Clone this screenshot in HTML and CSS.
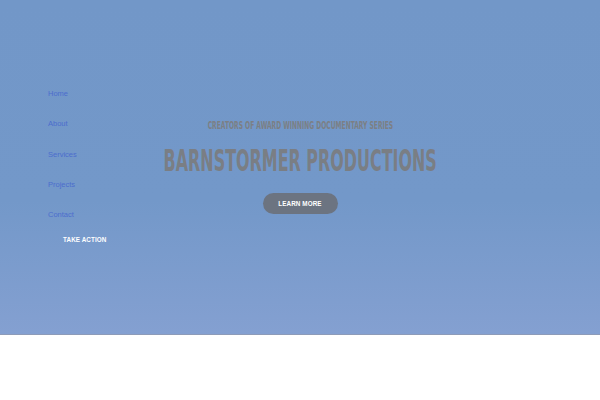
FILE: index.html
```html
<!DOCTYPE html>
<html>
<head>
<meta charset="utf-8">
<link rel="stylesheet" href="styles.css">
</head>
<body>
<section class="hero">
  <nav class="nav">
    <a class="nav-link" href="#">Home</a>
    <a class="nav-link" href="#">About</a>
    <a class="nav-link" href="#">Services</a>
    <a class="nav-link" href="#">Projects</a>
    <a class="nav-link" href="#">Contact</a>
    <a class="nav-cta" href="#">TAKE ACTION</a>
  </nav>
  <div class="center">
    <p class="kicker">CREATORS OF AWARD WINNING DOCUMENTARY SERIES</p>
    <h1 class="title">BARNSTORMER PRODUCTIONS</h1>
    <a class="btn" href="#">LEARN MORE</a>
  </div>
</section>
<section class="below"></section>
</body>
</html>
```
FILE: styles.css
```css
* { box-sizing: border-box; }
html, body { margin: 0; padding: 0; }
body { font-family: "Liberation Sans", Arial, sans-serif; background: #fff; }
.hero {
  height: 335px;
  background: linear-gradient(180deg, #7297c8 0%, #7398c9 60%, #84a0d1 100%);
  position: relative;
  display: flex;
  border-bottom: 1px solid #8d9bb8;
}
.nav {
  width: 160px;
  padding: 89px 0 0 48px;
  display: flex;
  flex-direction: column;
  align-items: flex-start;
}
.nav-link {
  font-size: 7.5px;
  color: #4c6dcd;
  text-decoration: none;
  height: 30.3px;
  line-height: 10px;
}
.nav-cta {
  margin: -4px 0 0 15px;
  font-size: 6.3px;
  font-weight: bold;
  color: #fff;
  text-decoration: none;
  letter-spacing: 0.1px;
}
.center {
  position: absolute;
  left: 0; right: 0; top: 119px;
  display: flex;
  flex-direction: column;
  align-items: center;
}
.kicker {
  margin: 0;
  font-family: "DejaVu Sans Condensed", "DejaVu Sans", sans-serif;
  font-stretch: condensed;
  font-weight: bold;
  font-size: 10px;
  color: #7c7f84;
  transform: scaleX(0.665);
  line-height: 14px;
  white-space: nowrap;
}
.title {
  margin: 11px 0 0;
  font-family: "DejaVu Sans Condensed", "DejaVu Sans", sans-serif;
  font-stretch: condensed;
  font-weight: bold;
  font-size: 31px;
  color: #7a7e84;
  line-height: 33px;
  transform: scaleX(0.571);
  white-space: nowrap;
}
.btn {
  margin-top: 16px;
  width: 75px;
  height: 21px;
  border-radius: 11px;
  background: #6c7481;
  color: #fff;
  font-size: 6.3px;
  font-weight: bold;
  text-decoration: none;
  display: flex;
  align-items: center;
  justify-content: center;
  letter-spacing: 0.1px;
}
.below { height: 65px; background: #fff; }
```
